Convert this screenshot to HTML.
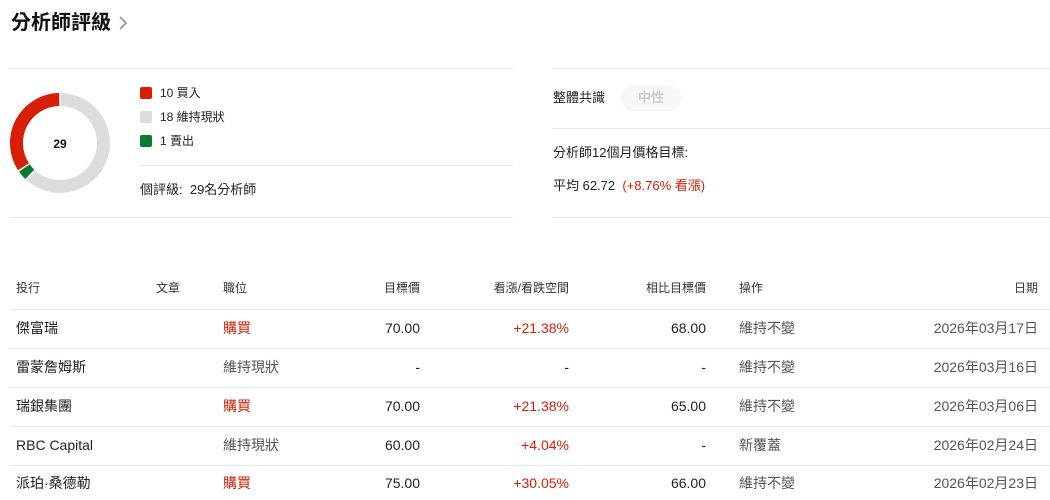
<!DOCTYPE html>
<html><head><meta charset="utf-8"><style>
*{margin:0;padding:0;box-sizing:border-box}
body{width:1050px;height:500px;background:#fff;font-family:"Liberation Sans","Noto Sans CJK TC",sans-serif;color:#222;position:relative;overflow:hidden}
.a{position:absolute;white-space:nowrap;line-height:20px}
.hl{position:absolute;height:1px;background:#e3e7ee}
.sq{position:absolute;width:12px;height:12px;border-radius:2px}
.red{color:#d81e06}
.gray{color:#555}
.th{font-size:12px;color:#333;top:278px}
.r{text-align:right}
.row{position:absolute;left:0;font-size:14px}
</style></head><body>
<div class="a" style="left:11px;top:11px;font-size:20px;font-weight:bold;color:#111;line-height:24px">分析師評級</div>
<svg class="a" style="left:117px;top:15px" width="12" height="16" viewBox="0 0 12 16"><path d="M3 2 L9 8 L3 14" fill="none" stroke="#999" stroke-width="1.8"/></svg>

<div class="hl" style="left:10px;top:68px;width:503px"></div>
<div class="hl" style="left:552px;top:68px;width:498px"></div>
<div class="hl" style="left:140px;top:165px;width:373px"></div>
<div class="hl" style="left:10px;top:217px;width:503px"></div>
<div class="hl" style="left:552px;top:128px;width:498px"></div>
<div class="hl" style="left:552px;top:217px;width:498px"></div>

<svg class="a" style="left:0;top:0" width="130" height="220">
<path d="M59.24 99.5 A43.5 43.5 0 0 0 23.52 166.69" fill="none" stroke="#d81e06" stroke-width="13"/>
<path d="M24.37 167.95 A43.5 43.5 0 0 0 29.78 174.29" fill="none" stroke="#0a7a32" stroke-width="13"/>
<path d="M60.76 99.5 A43.5 43.5 0 1 1 30.89 175.33" fill="none" stroke="#dcdcdc" stroke-width="13"/>
<text x="60" y="148" text-anchor="middle" font-size="12" font-weight="bold" font-family="Liberation Sans" fill="#111">29</text>
</svg>

<div class="sq" style="left:140px;top:87px;background:#d81e06"></div>
<div class="a" style="left:160px;top:83px;font-size:12px">10 買入</div>
<div class="sq" style="left:140px;top:111px;background:#dcdcdc"></div>
<div class="a" style="left:160px;top:107px;font-size:12px">18 維持現狀</div>
<div class="sq" style="left:140px;top:135px;background:#0a7a32"></div>
<div class="a" style="left:160px;top:131px;font-size:12px">1 賣出</div>
<div class="a" style="left:140px;top:180px;font-size:13px">個評級:&nbsp; 29名分析師</div>

<div class="a" style="left:553px;top:88px;font-size:13px">整體共識</div>
<div class="a" style="left:621px;top:85px;width:60px;height:26px;border-radius:13px;background:#f7f7f7;color:#ccc;font-size:13px;font-weight:bold;text-align:center;line-height:26px">中性</div>
<div class="a" style="left:553px;top:143px;font-size:13px">分析師12個月價格目標:</div>
<div class="a" style="left:553px;top:176px;font-size:13px">平均 62.72 &nbsp;<span class="red">(+8.76% 看漲)</span></div>

<div class="a th" style="left:16px">投行</div>
<div class="a th" style="left:156px">文章</div>
<div class="a th" style="left:223px">職位</div>
<div class="a th r" style="right:630px">目標價</div>
<div class="a th r" style="right:481px">看漲/看跌空間</div>
<div class="a th r" style="right:344px">相比目標價</div>
<div class="a th" style="left:739px">操作</div>
<div class="a th r" style="right:12px">日期</div>

<div class="hl" style="left:10px;top:309px;width:1040px"></div>
<div class="hl" style="left:10px;top:348px;width:1040px"></div>
<div class="hl" style="left:10px;top:387px;width:1040px"></div>
<div class="hl" style="left:10px;top:426px;width:1040px"></div>
<div class="hl" style="left:10px;top:465px;width:1040px"></div>

<div class="row" style="top:318px">
<div class="a" style="left:16px;top:0">傑富瑞</div><div class="a red" style="left:223px;top:0">購買</div><div class="a r" style="right:-420px;top:0">70.00</div><div class="a r red" style="right:-569px;top:0">+21.38%</div><div class="a r" style="right:-706px;top:0">68.00</div><div class="a gray" style="left:739px;top:0">維持不變</div><div class="a r gray" style="right:-1038px;top:0">2026年03月17日</div>
</div>
<div class="row" style="top:357px">
<div class="a" style="left:16px;top:0">雷蒙詹姆斯</div><div class="a gray" style="left:223px;top:0">維持現狀</div><div class="a r" style="right:-420px;top:0">-</div><div class="a r" style="right:-569px;top:0">-</div><div class="a r" style="right:-706px;top:0">-</div><div class="a gray" style="left:739px;top:0">維持不變</div><div class="a r gray" style="right:-1038px;top:0">2026年03月16日</div>
</div>
<div class="row" style="top:396px">
<div class="a" style="left:16px;top:0">瑞銀集團</div><div class="a red" style="left:223px;top:0">購買</div><div class="a r" style="right:-420px;top:0">70.00</div><div class="a r red" style="right:-569px;top:0">+21.38%</div><div class="a r" style="right:-706px;top:0">65.00</div><div class="a gray" style="left:739px;top:0">維持不變</div><div class="a r gray" style="right:-1038px;top:0">2026年03月06日</div>
</div>
<div class="row" style="top:435px">
<div class="a" style="left:16px;top:0">RBC Capital</div><div class="a gray" style="left:223px;top:0">維持現狀</div><div class="a r" style="right:-420px;top:0">60.00</div><div class="a r red" style="right:-569px;top:0">+4.04%</div><div class="a r" style="right:-706px;top:0">-</div><div class="a gray" style="left:739px;top:0">新覆蓋</div><div class="a r gray" style="right:-1038px;top:0">2026年02月24日</div>
</div>
<div class="row" style="top:473px">
<div class="a" style="left:16px;top:0">派珀·桑德勒</div><div class="a red" style="left:223px;top:0">購買</div><div class="a r" style="right:-420px;top:0">75.00</div><div class="a r red" style="right:-569px;top:0">+30.05%</div><div class="a r" style="right:-706px;top:0">66.00</div><div class="a gray" style="left:739px;top:0">維持不變</div><div class="a r gray" style="right:-1038px;top:0">2026年02月23日</div>
</div>
</body></html>
